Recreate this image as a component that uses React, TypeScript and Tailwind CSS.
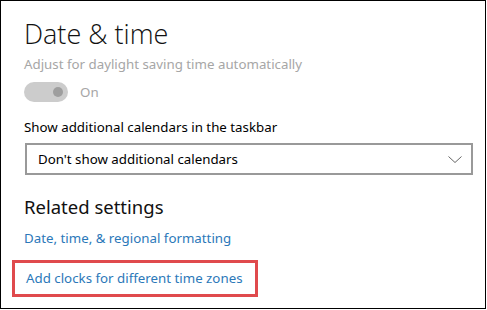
import React from "react";

export default function App() {
  return (
    <div
      className="w-[486px] h-[309px] border border-black bg-white pl-[23px] overflow-hidden text-[13.3px]"
      style={{ fontFamily: '"Noto Sans", "Open Sans", sans-serif' }}
    >
      <div
        className="mt-[17px] text-[27px] leading-[32px] font-light text-[#111]"
        style={{ fontFamily: '"Open Sans", "Noto Sans", sans-serif' }}
      >
        Date &amp; time
      </div>
      <div className="mt-[4px] leading-[20px] text-[#a6a6a6]">
        Adjust for daylight saving time automatically
      </div>
      <div className="mt-[8px] flex items-center h-[20px]">
        <div className="w-[44px] h-[20px] rounded-full bg-[#cccccc] flex items-center justify-end pr-[5px]">
          <div className="w-[10px] h-[10px] rounded-full bg-[#9e9e9e]" />
        </div>
        <span className="ml-[12px] leading-[20px] text-[#a6a6a6]">On</span>
      </div>
      <div className="mt-[15px] leading-[20px] text-black">
        Show additional calendars in the taskbar
      </div>
      <div className="mt-[6px] ml-[1px] w-[448px] h-[32px] border-2 border-[#999999] flex items-center justify-between pl-[11px] pr-[8px]">
        <span className="leading-[28px] text-black">Don't show additional calendars</span>
        <svg width="16" height="10" viewBox="0 0 16 10">
          <polyline points="1.5,2.5 8,8.5 14.5,2.5" fill="none" stroke="#666" strokeWidth="1" />
        </svg>
      </div>
      <div className="mt-[20px] text-[18.5px] leading-[24px] text-[#111]">Related settings</div>
      <div className="mt-[9px] leading-[20px] text-[#2b78b9]">
        Date, time, &amp; regional formatting
      </div>
      <div className="mt-[12px] ml-[-12px] w-[246px] h-[37px] border-[3px] border-[#e04a4d] pl-[11px] pt-[5px]">
        <span className="block leading-[20px] text-[#2b78b9]">
          Add clocks for different time zones
        </span>
      </div>
    </div>
  );
}
